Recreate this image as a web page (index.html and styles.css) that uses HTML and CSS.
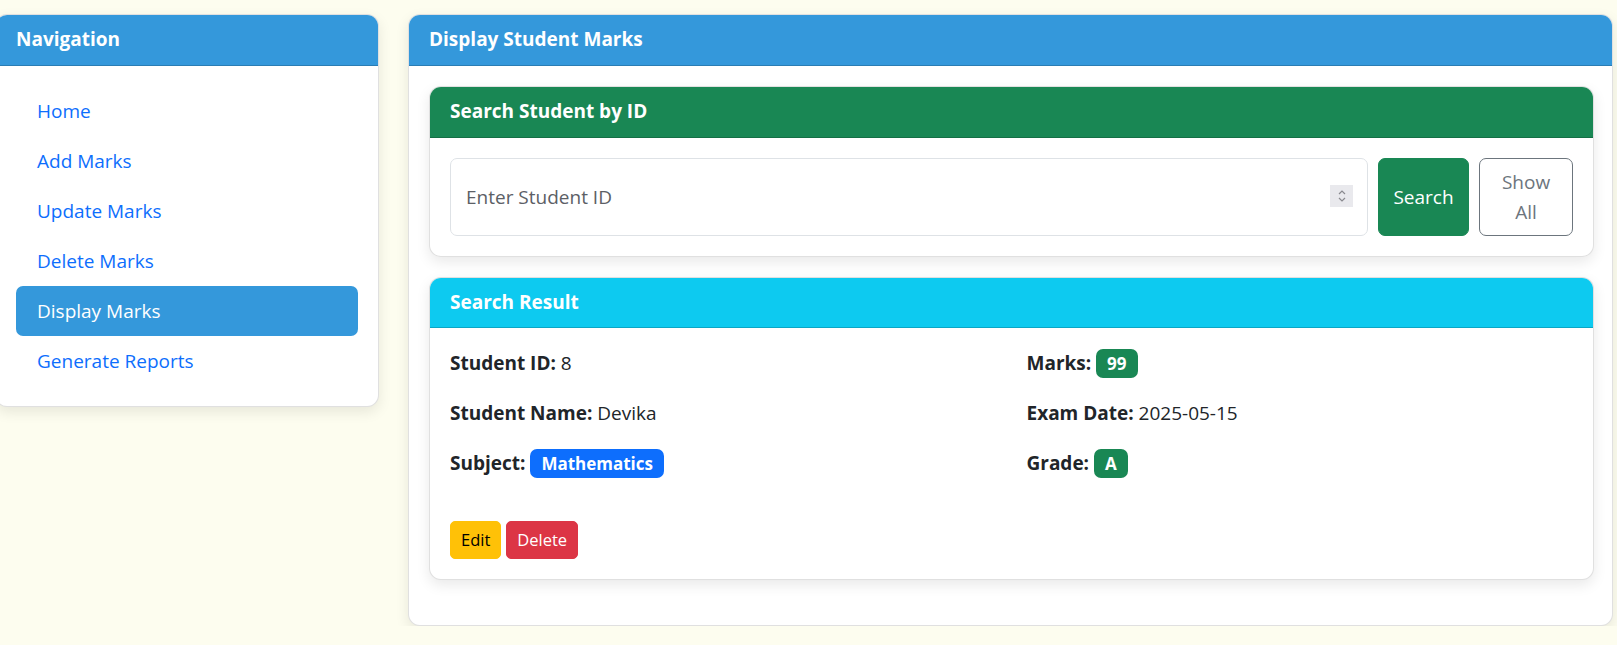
FILE: index.html
```html
<!DOCTYPE html>
<html lang="en">
<head>
<meta charset="utf-8">
<title>Display Student Marks</title>
<link rel="stylesheet" href="styles.css">
</head>
<body>
<div class="layout">
  <aside class="card nav-card">
    <div class="card-header header-blue">Navigation</div>
    <ul class="nav-list">
      <li><a class="nav-link" href="#">Home</a></li>
      <li><a class="nav-link" href="#">Add Marks</a></li>
      <li><a class="nav-link" href="#">Update Marks</a></li>
      <li><a class="nav-link" href="#">Delete Marks</a></li>
      <li><a class="nav-link active" href="#">Display Marks</a></li>
      <li><a class="nav-link" href="#">Generate Reports</a></li>
    </ul>
  </aside>

  <main class="card main-card">
    <div class="card-header header-blue">Display Student Marks</div>
    <div class="main-body">
      <section class="card inner-card">
        <div class="card-header header-green">Search Student by ID</div>
        <div class="inner-body search-row">
          <div class="input-wrap">
            <input class="id-input" type="text" placeholder="Enter Student ID">
            <span class="spinner">
              <svg width="10" height="16" viewBox="0 0 10 16"><path d="M2 6 L5 3 L8 6" fill="none" stroke="#8a8a8f" stroke-width="1.2"/><path d="M2 10 L5 13 L8 10" fill="none" stroke="#8a8a8f" stroke-width="1.2"/></svg>
            </span>
          </div>
          <button class="btn btn-success">Search</button>
          <button class="btn btn-outline">Show All</button>
        </div>
      </section>

      <section class="card inner-card">
        <div class="card-header header-cyan">Search Result</div>
        <div class="inner-body">
          <div class="result-grid">
            <div>
              <p class="field"><strong>Student ID:</strong> 8</p>
              <p class="field"><strong>Student Name:</strong> Devika</p>
              <p class="field"><strong>Subject:</strong> <span class="badge badge-blue">Mathematics</span></p>
            </div>
            <div>
              <p class="field"><strong>Marks:</strong> <span class="badge badge-green">99</span></p>
              <p class="field"><strong>Exam Date:</strong> 2025-05-15</p>
              <p class="field"><strong>Grade:</strong> <span class="badge badge-green">A</span></p>
            </div>
          </div>
          <div class="actions">
            <button class="btn-sm btn-warning">Edit</button>
            <button class="btn-sm btn-danger">Delete</button>
          </div>
        </div>
      </section>
    </div>
  </main>
</div>
</body>
</html>
```

FILE: styles.css
```css
* { box-sizing: border-box; }

html, body {
  margin: 0;
  padding: 0;
}

body {
  background: #fdfdef;
  font-family: "Open Sans", "Noto Sans", sans-serif;
  font-size: 19px;
  line-height: 30px;
  color: #212529;
  overflow: hidden;
}

.layout {
  display: flex;
  align-items: flex-start;
  gap: 29px;
  padding-top: 14px;
}

.card {
  background: #fff;
  border: 1px solid rgba(0, 0, 0, 0.12);
  border-radius: 12px;
  box-shadow: 0 5px 14px rgba(0, 0, 0, 0.09);
  overflow: hidden;
}

.card-header {
  padding: 10px 20px;
  font-weight: 700;
  color: #fff;
  line-height: 29.5px;
  border-bottom: 1px solid rgba(0, 0, 0, 0.175);
}

.header-blue { background: #3498db; }
.header-green { background: #198754; }
.header-cyan { background: #0dcaf0; }

.nav-card {
  width: 384px;
  margin-left: -5px;
  flex: none;
}

.nav-list {
  list-style: none;
  margin: 0;
  padding: 20px;
}

.nav-link {
  display: block;
  padding: 10px 21px;
  color: #0d6efd;
  text-decoration: none;
  border-radius: 7px;
}

.nav-link.active {
  background: #3498db;
  color: #fff;
}

.main-card {
  width: 1205px;
  flex: none;
}

.main-body {
  padding: 20.5px 18px 45px 20px;
  display: flex;
  flex-direction: column;
  gap: 20px;
}

.inner-body {
  padding: 20px;
}

.search-row {
  display: flex;
  gap: 10px;
  align-items: stretch;
}

.input-wrap {
  flex: 1;
  position: relative;
  display: flex;
}

.id-input {
  flex: 1;
  border: 1px solid #dee2e6;
  border-radius: 7px;
  padding: 0 15px;
  font-family: inherit;
  font-size: 19px;
  color: #212529;
  outline: none;
}

.id-input::placeholder {
  color: #5c6066;
}

.spinner {
  position: absolute;
  right: 15px;
  top: 27px;
  width: 23px;
  height: 22px;
  background: #e9e9ed;
  display: flex;
  align-items: center;
  justify-content: center;
}

.btn {
  font-family: inherit;
  font-size: 19px;
  line-height: 30px;
  padding: 8px 12px;
  border-radius: 7px;
  border: 1px solid transparent;
  cursor: pointer;
}

.btn-success {
  background: #198754;
  border-color: #198754;
  color: #fff;
  width: 91px;
}

.btn-outline {
  background: #fff;
  border-color: #6c757d;
  color: #6c757d;
  width: 94px;
}

.result-grid {
  display: grid;
  grid-template-columns: 1fr 1fr;
  column-gap: 30px;
}

.field {
  margin: 0 0 20px 0;
}

.field strong {
  font-weight: 700;
}

.badge {
  display: inline-block;
  font-size: 17px;
  font-weight: 700;
  line-height: 17px;
  padding: 6px 11px;
  border-radius: 7px;
  color: #fff;
  vertical-align: 0;
}

.badge-blue { background: #0d6efd; }
.badge-green { background: #198754; }

.actions {
  display: flex;
  gap: 5px;
  margin-top: 23px;
}

.btn-sm {
  font-family: inherit;
  font-size: 16.5px;
  line-height: 26px;
  padding: 5px 10px;
  border-radius: 5px;
  border: 1px solid transparent;
  cursor: pointer;
}

.btn-warning {
  background: #ffc107;
  border-color: #ffc107;
  color: #000;
}

.btn-danger {
  background: #dc3545;
  border-color: #dc3545;
  color: #fff;
}
```
